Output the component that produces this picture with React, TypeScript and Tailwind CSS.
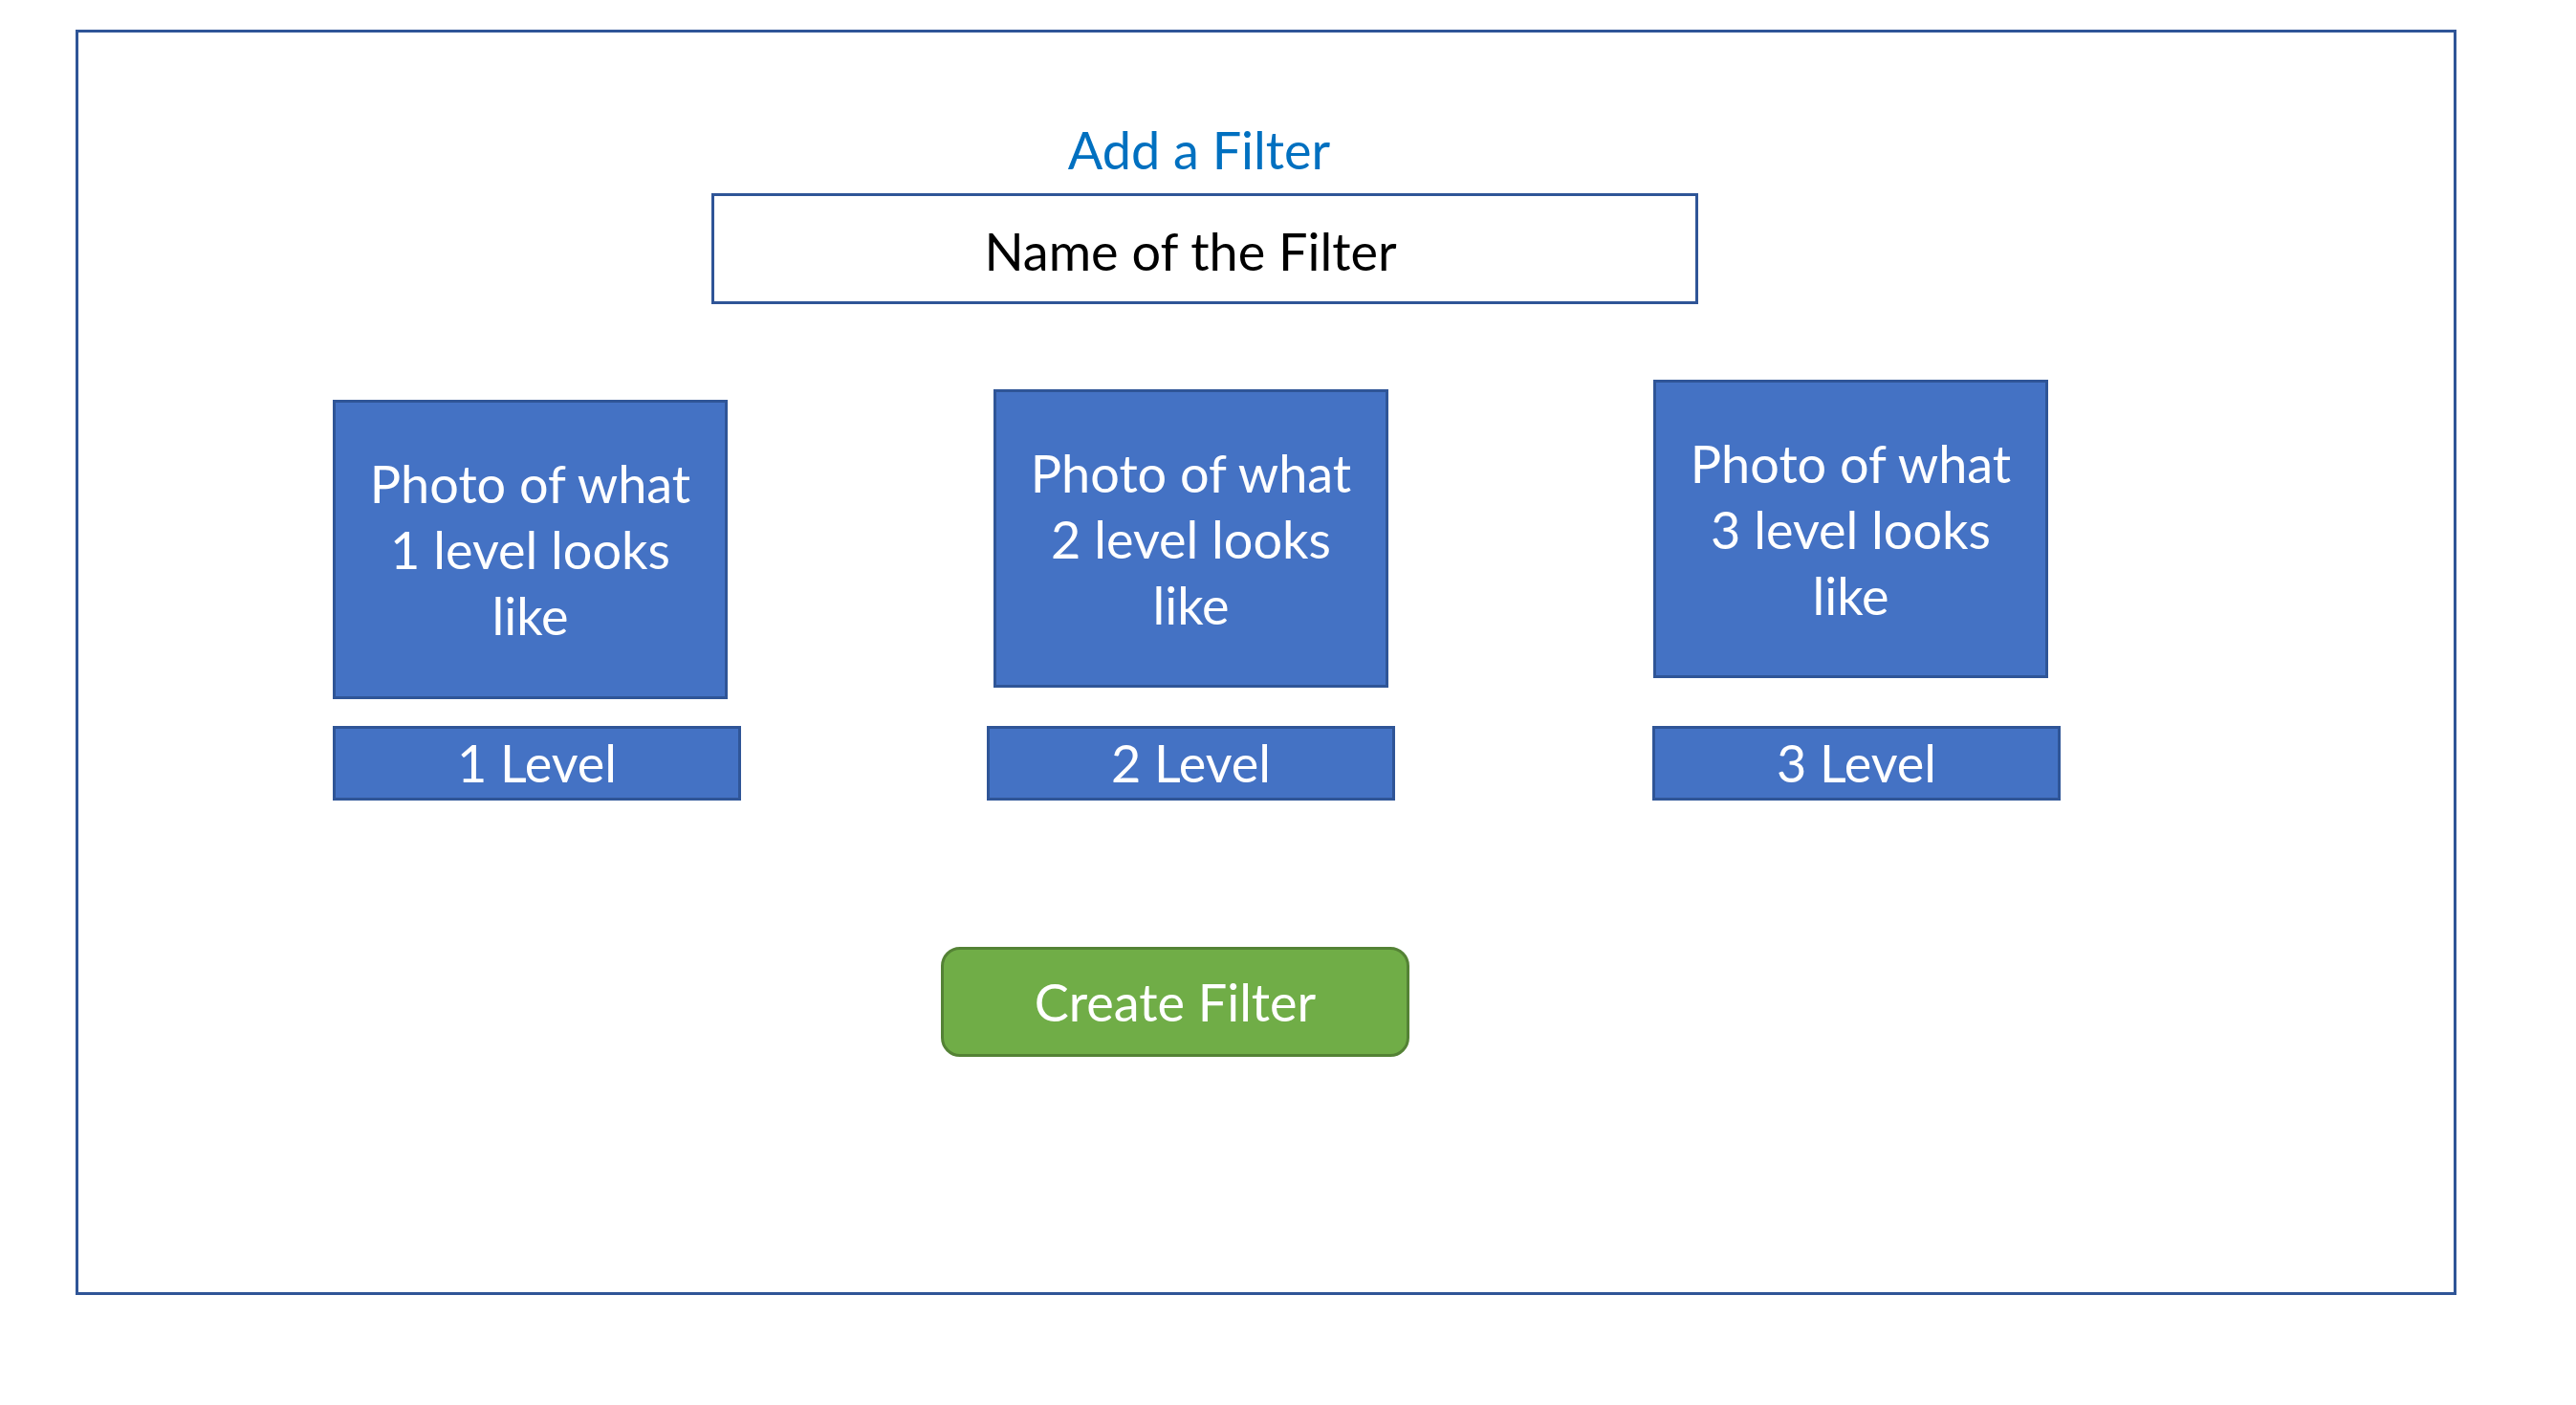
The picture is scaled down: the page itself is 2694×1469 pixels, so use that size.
import React from "react";

const font = { fontFamily: "Lato, 'Liberation Sans', sans-serif" };

function Column({
  n,
  photoTop,
  photoLeft,
  gap,
  colLeft,
}: {
  n: number;
  photoTop: string;
  photoLeft: string;
  gap: string;
  colLeft: string;
}) {
  return (
    <div className={`flex flex-col items-start ${colLeft}`}>
      <div
        className={`${photoTop} ${photoLeft} w-[413px] ${n === 1 ? "h-[313px]" : "h-[312px]"} bg-[#4472c4] border-[3px] border-[#2f5597] flex flex-col items-center justify-center text-white text-[54px] leading-[69px]`}
      >
        <span>Photo of what</span>
        <span>{n} level looks</span>
        <span>like</span>
      </div>
      <div
        className={`${gap} w-[427px] h-[78px] bg-[#4472c4] border-[3px] border-[#2f5597] flex items-center justify-center text-white text-[54px] leading-[62px]`}
      >
        {n} Level
      </div>
    </div>
  );
}

export default function App() {
  return (
    <div className="w-[2694px] h-[1469px] bg-white overflow-hidden" style={font}>
      <div className="ml-[79px] mt-[31px] w-[2490px] h-[1323px] border-[3px] border-[#2f5597] flex flex-col items-start">
        <div className="mt-[92px] ml-[662px] w-[1032px] pr-[12px] text-center text-[#0070c0] text-[54px] leading-[62px]">
          Add a Filter
        </div>
        <div className="mt-[14px] ml-[662px] w-[1032px] h-[116px] border-[3px] border-[#2f5597] flex items-center justify-center pt-[6px] pr-[30px] text-black text-[54px] leading-[62px]">
          Name of the Filter
        </div>
        <div className="mt-[79px] flex flex-row items-start">
          <Column n={1} colLeft="ml-[266px]" photoTop="mt-[21px]" photoLeft="ml-0" gap="mt-[28px]" />
          <Column n={2} colLeft="ml-[257px]" photoTop="mt-[10px]" photoLeft="ml-[7px]" gap="mt-[40px]" />
          <Column n={3} colLeft="ml-[269px]" photoTop="mt-0" photoLeft="ml-[1px]" gap="mt-[50px]" />
        </div>
        <button className="mt-[153px] ml-[902px] w-[490px] h-[115px] rounded-[20px] border-[3px] border-[#548235] bg-[#70ad47] flex items-center justify-center text-white text-[54px] leading-[62px]">
          Create Filter
        </button>
      </div>
    </div>
  );
}
